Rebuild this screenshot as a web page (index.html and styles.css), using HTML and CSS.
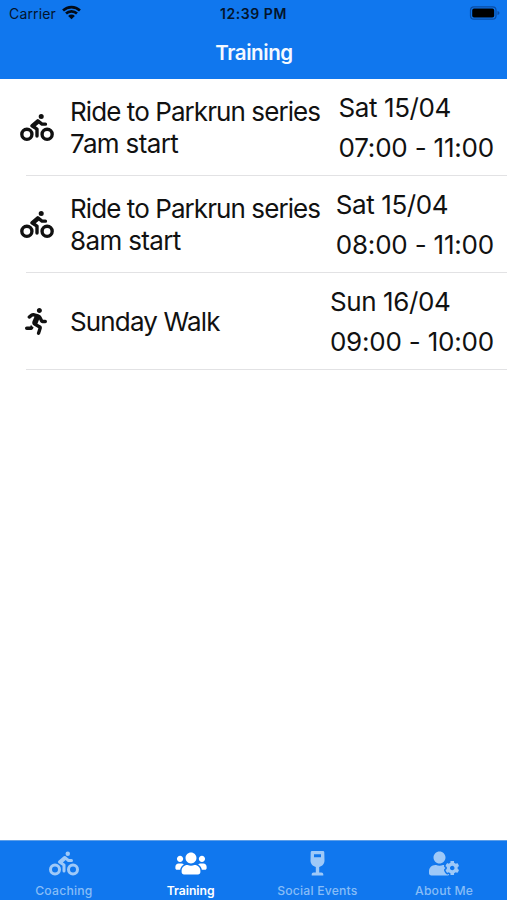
FILE: index.html
```html
<!DOCTYPE html>
<html lang="en">
<head>
<meta charset="utf-8">
<title>Training</title>
<link rel="stylesheet" href="styles.css">
</head>
<body>
<svg class="defs" width="0" height="0">
  <symbol id="bike" viewBox="0 0 640 512"><path d="M400 96a48 48 0 1 0-48-48 48 48 0 0 0 48 48zm-4 121a31.9 31.9 0 0 0 20 7h64a32 32 0 0 0 0-64h-52.78L356 103a31.94 31.94 0 0 0-40.81.68l-112 96a32 32 0 0 0 3.08 50.92L288 305.12V416a32 32 0 0 0 64 0V288a32 32 0 0 0-14.25-26.62l-41.36-27.57 58.25-49.92zm116 39a128 128 0 1 0 128 128 128 128 0 0 0-128-128zm0 192a64 64 0 1 1 64-64 64 64 0 0 1-64 64zM128 256a128 128 0 1 0 128 128 128 128 0 0 0-128-128zm0 192a64 64 0 1 1 64-64 64 64 0 0 1-64 64z"/></symbol>
</svg>
<div class="app">
  <header class="header">
    <div class="status">
      <div class="carrier"><span class="carrier-name">Carrier</span>
        <svg class="wifi" viewBox="0 0 18 14"><path d="M1 5.1a11.5 11.5 0 0 1 16 0M3.8 8a7.500 7.500 0 0 1 10.400 0" fill="none" stroke="#020b18" stroke-width="2.5"/><path d="M9 13.4L5.800 10.300a4.600 4.600 0 0 1 6.400 0z" fill="#020b18"/></svg>
      </div>
      <div class="clock"><span class="clock-text">12:39 PM</span></div>
      <div class="battery"><svg viewBox="0 0 32 14" width="32" height="14"><rect x="1.5" y=".8" width="25.5" height="12.4" rx="3.4" fill="none" stroke="#0a4da4" stroke-width="1.2"/><rect x="3.2" y="2.6" width="22" height="9" rx="1.8" fill="#000"/><path d="M28.5 5v4q2-.5 2-2t-2-2z" fill="#0a4da4"/></svg></div>
    </div>
    <h1 class="title"><span class="title-text">Training</span></h1>
  </header>
  <main class="list">
    <section class="row">
      <svg class="row-icon bike"><use href="#bike"/></svg>
      <div class="name"><span class="ride">Ride to Parkrun series</span><br><span class="start">7am start</span></div>
      <div class="when"><span class="date">Sat 15/04</span><span class="time">07:00 - 11:00</span></div>
    </section>
    <section class="row">
      <svg class="row-icon bike"><use href="#bike"/></svg>
      <div class="name"><span class="ride">Ride to Parkrun series</span><br><span class="start">8am start</span></div>
      <div class="when"><span class="date">Sat 15/04</span><span class="time">08:00 - 11:00</span></div>
    </section>
    <section class="row">
      <svg class="row-icon run" viewBox="0 0 416 512"><path d="M272 96c26.51 0 48-21.49 48-48S298.51 0 272 0s-48 21.49-48 48 21.49 48 48 48zM113.69 317.47l-14.8 34.52H32c-17.67 0-32 14.33-32 32s14.33 32 32 32h77.45c19.25 0 36.58-11.44 44.11-29.09l8.79-20.52-10.67-6.3c-17.32-10.23-30.06-25.37-37.99-42.61zM384 223.99h-44.03l-26.06-53.25c-12.5-25.55-35.45-44.23-61.78-50.94l-71.08-21.14c-28.3-6.8-57.77-.55-80.84 17.14l-39.67 30.41c-14.03 10.75-16.69 30.83-5.94 44.86s30.84 16.69 44.86 5.94l39.66-30.41c7.67-5.89 17.44-8 25.27-6.14l14.7 4.37-37.46 87.39c-12.62 29.48-1.31 64.01 26.3 80.31l84.98 50.17-27.47 87.73c-5.28 16.86 4.11 34.82 20.97 40.09 3.19 1 6.41 1.48 9.58 1.48 13.61 0 26.23-8.77 30.52-22.45l31.64-101.06c5.91-20.77-2.89-43.08-21.64-54.39l-61.24-36.14 31.31-78.28 20.27 41.43c8 16.34 24.92 26.89 43.11 26.89H384c17.67 0 32-14.33 32-32s-14.33-31.99-32-31.99z"/></svg>
      <div class="name walk">Sunday Walk</div>
      <div class="when"><span class="date">Sun 16/04</span><span class="time">09:00 - 10:00</span></div>
    </section>
  </main>
  <nav class="tabs">
    <div class="tab"><svg class="tab-icon"><use href="#bike"/></svg><span>Coaching</span></div>
    <div class="tab active"><svg class="tab-icon group" viewBox="0 0 640 512"><path d="M96 224c35.3 0 64-28.7 64-64s-28.7-64-64-64-64 28.7-64 64 28.7 64 64 64zm448 0c35.3 0 64-28.7 64-64s-28.7-64-64-64-64 28.7-64 64 28.7 64 64 64zm32 32h-64c-17.6 0-33.5 7.1-45.1 18.6 40.3 22.1 68.9 62 75.1 109.4h66c17.7 0 32-14.3 32-32v-32c0-35.3-28.7-64-64-64zm-256 0c61.9 0 112-50.1 112-112S381.9 32 320 32 208 82.1 208 144s50.1 112 112 112zm76.8 32h-8.3c-20.8 10-43.9 16-68.5 16s-47.6-6-68.5-16h-8.3C179.6 288 128 339.6 128 403.2V432c0 26.5 21.5 48 48 48h288c26.5 0 48-21.5 48-48v-28.8c0-63.6-51.6-115.2-115.2-115.2zm-223.7-13.4C161.5 263.1 145.6 256 128 256H64c-35.3 0-64 28.7-64 64v32c0 17.7 14.3 32 32 32h65.9c6.3-47.4 34.9-87.3 75.2-109.4z"/></svg><span>Training</span></div>
    <div class="tab"><svg class="tab-icon glass" viewBox="0 0 15 25"><path fill-rule="evenodd" d="M2 0h11q1.2 0 1.3 1.2l.2 8.3c0 3.3-2.2 5.800-5.300 6.400v5.500h2.300c1 0 1.800.9 1.800 1.800v1.400H1.700v-1.400c0-.9.8-1.800 1.800-1.800h2.300v-5.500C2.700 15.300.5 12.800.5 9.500L.7 1.200Q.8 0 2 0zM4 3.200v3h7v-3z"/></svg><span>Social Events</span></div>
    <div class="tab"><svg class="tab-icon user" viewBox="0 0 640 512"><path d="M610.5 373.3c2.6-14.1 2.6-28.5 0-42.6l25.8-14.9c3-1.7 4.3-5.2 3.3-8.5-6.7-21.6-18.2-41.2-33.2-57.4-2.3-2.5-6-3.1-9-1.4l-25.8 14.9c-10.9-9.3-23.4-16.5-36.9-21.3v-29.8c0-3.400-2.400-6.400-5.700-7.100-22.300-5-45-4.800-66.200 0-3.300.7-5.700 3.700-5.700 7.100v29.800c-13.500 4.800-26 12-36.900 21.300l-25.800-14.900c-2.900-1.700-6.700-1.100-9 1.400-15 16.200-26.500 35.800-33.200 57.400-1 3.300.4 6.800 3.300 8.500l25.800 14.900c-2.600 14.100-2.600 28.500 0 42.600l-25.800 14.900c-3 1.700-4.300 5.200-3.300 8.500 6.700 21.600 18.200 41.100 33.200 57.400 2.300 2.500 6 3.100 9 1.400l25.800-14.900c10.900 9.300 23.400 16.500 36.900 21.300v29.800c0 3.400 2.400 6.400 5.700 7.100 22.300 5 45 4.800 66.200 0 3.300-.7 5.700-3.700 5.700-7.100v-29.800c13.500-4.800 26-12 36.900-21.300l25.800 14.900c2.900 1.700 6.700 1.100 9-1.400 15-16.200 26.500-35.800 33.200-57.400 1-3.300-.4-6.800-3.300-8.500l-25.800-14.900zM496 400.500c-26.800 0-48.500-21.800-48.500-48.500s21.800-48.500 48.500-48.500 48.500 21.800 48.500 48.500-21.700 48.500-48.500 48.500zM224 256c70.700 0 128-57.300 128-128S294.700 0 224 0 96 57.300 96 128s57.300 128 128 128zm201.200 226.500c-2.300-1.200-4.600-2.600-6.800-3.900l-7.900 4.600c-6 3.400-12.800 5.300-19.600 5.300-10.900 0-21.400-4.600-28.900-12.600-18.300-19.800-32.300-43.900-40.200-69.600-5.500-17.700 1.900-36.400 17.900-45.700l7.900-4.600c-.1-2.600-.1-5.200 0-7.800l-7.900-4.600c-16-9.200-23.400-28-17.900-45.700.9-2.900 2.200-5.800 3.200-8.700-3.800-.3-7.500-1.200-11.400-1.200h-16.700c-22.200 10.200-46.900 16-72.900 16s-50.600-5.800-72.900-16h-16.700C60.200 288 0 348.200 0 422.400V464c0 26.500 21.500 48 48 48h352c10.100 0 19.500-3.200 27.200-8.500-1.200-3.800-2-7.700-2-11.800v-9.200z"/></svg><span>About Me</span></div>
  </nav>
</div>
</body>
</html>
```
FILE: styles.css
```css
* { box-sizing: border-box; }
body { margin: 0; font-family: Inter, "Liberation Sans", sans-serif; color: #111; background: #fff; }
.defs { display: none; }
.app { height: 900px; display: flex; flex-direction: column; }
.header { height: 79px; background: #1077ee; flex: none; }
.status { height: 27px; display: grid; grid-template-columns: 1fr 1fr 1fr; align-items: center; font-size: 14px; color: #03142c; }
.carrier { display: flex; align-items: center; gap: 6px; padding-left: 9px; }
.carrier-name { letter-spacing: .15px; }
.wifi { width: 19px; height: 15px; margin-top: -2px; }
.clock { text-align: center; font-weight: 600; letter-spacing: .55px; }
.battery { display: flex; justify-content: flex-end; padding-right: 6px; margin-top: -1px; }
.title { margin: 0; height: 52px; line-height: 52px; padding-left: 1px; text-align: center; font-size: 20.5px; font-weight: 600; letter-spacing: -.4px; color: #f4f9ff; }
.list { flex: 1; }
.row { height: 97px; display: flex; align-items: center; padding: 0 13px 0 20px; background: linear-gradient(#e2e2e4, #e2e2e4) 26px 100% / 100% 1px no-repeat; }
.row-icon { flex: none; fill: #111; }
.bike { width: 34px; height: 27px; }
.run { width: 22px; height: 27px; margin: 0 7px 0 5px; }
.name { flex: 1; padding-left: 16px; font-size: 26px; line-height: 32px; white-space: nowrap; }
.ride { letter-spacing: -.92px; }
.start { letter-spacing: -.65px; }
.walk { letter-spacing: -.85px; }
.when { display: flex; flex-direction: column; font-size: 26px; line-height: 40px; white-space: nowrap; margin-top: 1px; }
.date { letter-spacing: -.4px; }
.time { letter-spacing: -.2px; }
.tabs { height: 60px; flex: none; background: #1077ee; display: grid; grid-template-columns: repeat(4, 1fr); border-top: 1px solid #5d9fe9; }
.tab { display: flex; flex-direction: column; align-items: center; color: #87bdf7; fill: #9ec9f8; font-size: 12.2px; font-weight: 500; line-height: 16px; padding: 10px 0 0 1px; letter-spacing: .2px; }
.tab.active { color: #fff; fill: #fff; font-weight: 600; letter-spacing: 0; }
.tab-icon { width: 30px; height: 25px; margin-bottom: 7px; }
.group { width: 32px; }
.glass { width: 15px; }
```
